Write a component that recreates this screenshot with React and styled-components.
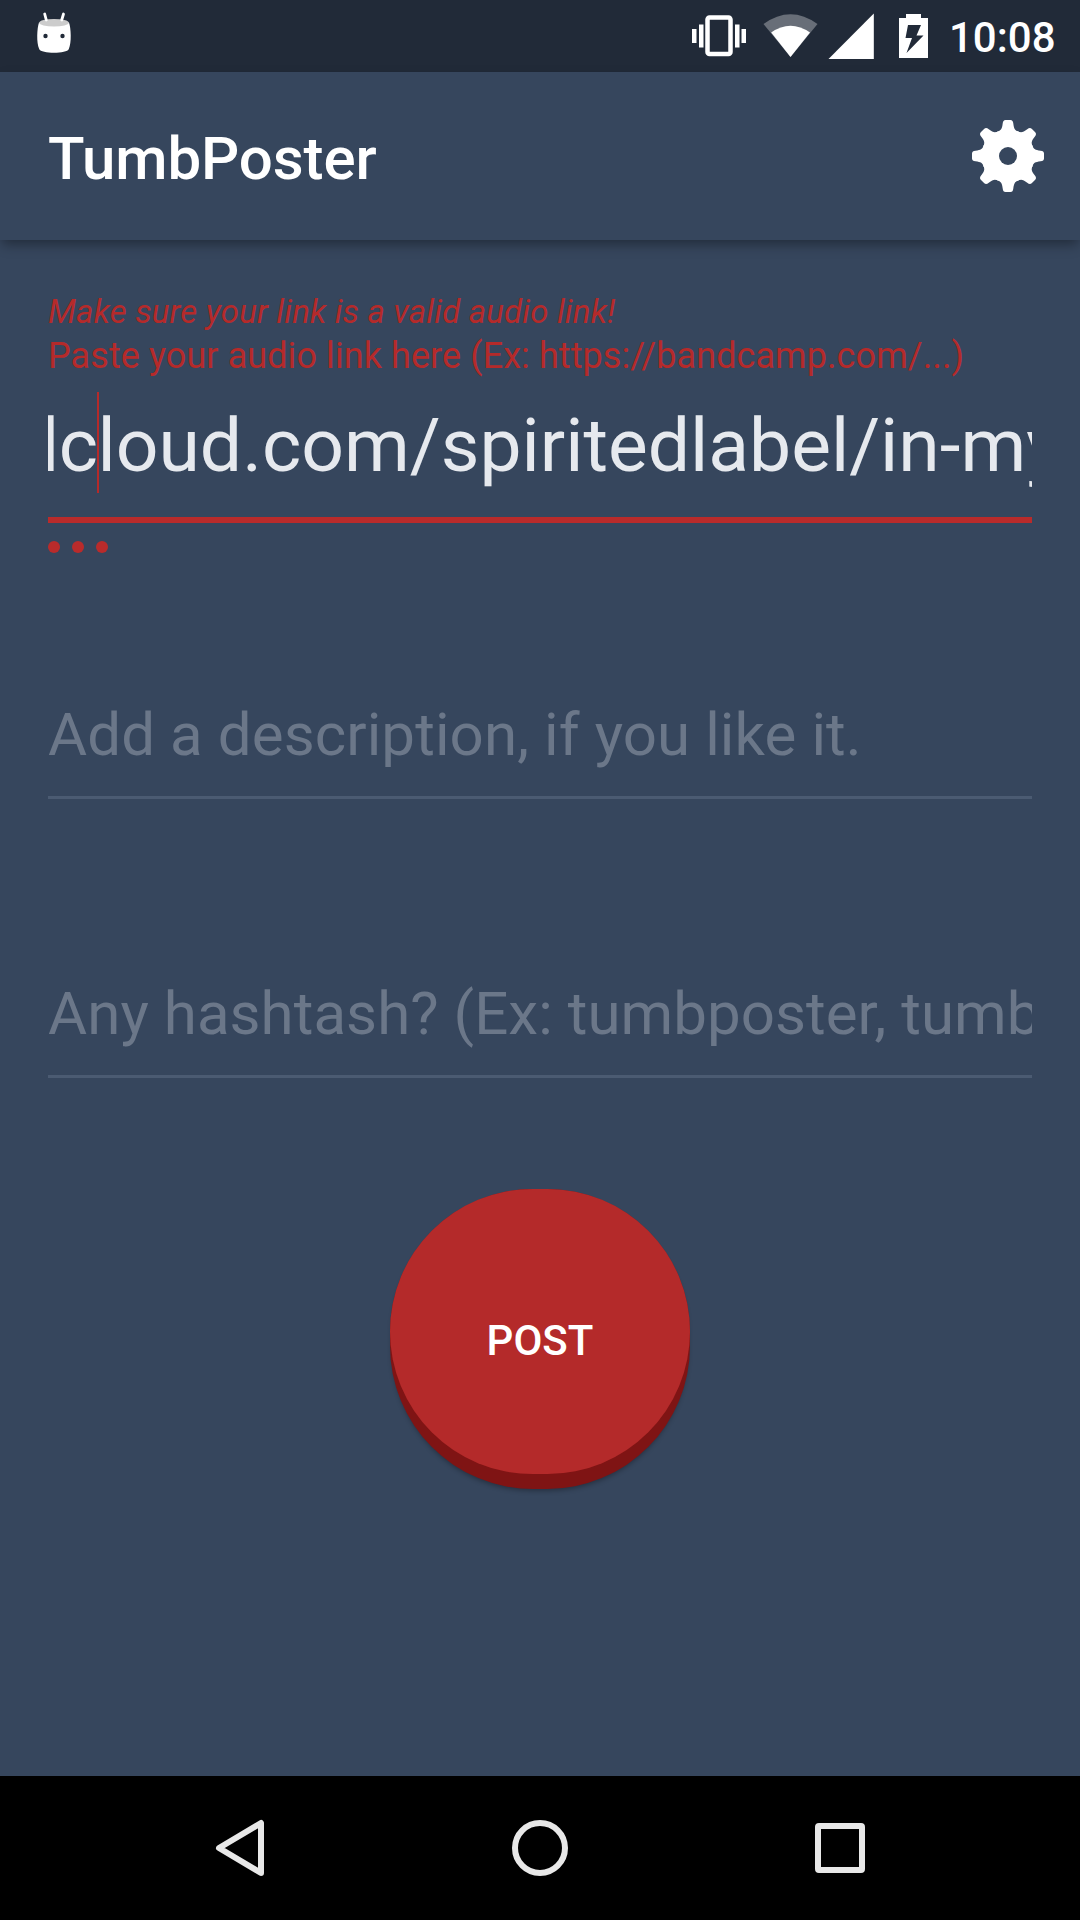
import React from "react";
import styled, { createGlobalStyle } from "styled-components";

const GlobalStyle = createGlobalStyle`
  * { box-sizing: border-box; }
  html, body { margin: 0; padding: 0; background: #36465d; }
  body { font-family: Roboto, "Noto Sans", sans-serif; }
`;

const Screen = styled.div`
  width: 1080px;
  height: 1920px;
  display: flex;
  flex-direction: column;
  background: #36465d;
  overflow: hidden;
`;

const StatusBar = styled.header`
  height: 72px;
  flex: none;
  display: flex;
  justify-content: space-between;
  background: #212a38;
`;

const StatusGroup = styled.div`
  display: flex;
  align-items: flex-start;
`;

const StatusIcon = styled.svg`
  display: block;
  height: 72px;
  flex: none;
`;

const Clock = styled.time`
  width: 131px;
  color: #fff;
  font-size: 42px;
  font-weight: 500;
  line-height: 76px;
  height: 72px;
  white-space: nowrap;
`;

const Toolbar = styled.div`
  height: 168px;
  flex: none;
  display: flex;
  align-items: center;
  justify-content: space-between;
  padding: 0 36px 0 48px;
  background: #36465d;
  box-shadow: 0 6px 12px -2px rgba(0, 0, 0, 0.38);
`;

const Title = styled.h1`
  margin: 0;
  padding-top: 5px;
  color: #fff;
  font-size: 60px;
  font-weight: 500;
  line-height: 70px;
  letter-spacing: -0.1px;
`;

const IconButton = styled.button`
  display: block;
  padding: 0;
  border: 0;
  background: none;
  line-height: 0;
`;

const Form = styled.main`
  flex: 1;
  display: flex;
  flex-direction: column;
  align-items: stretch;
  padding: 48px 48px 0;
`;

const Warning = styled.div`
  height: 44px;
  color: #b52a2a;
  font-size: 33px;
  font-style: italic;
  line-height: 47px;
  letter-spacing: 0.16px;
  white-space: nowrap;
`;

const Label = styled.div`
  height: 44px;
  color: #b52a2a;
  font-size: 36px;
  line-height: 49px;
  letter-spacing: 0.08px;
  white-space: nowrap;
`;

const LinkField = styled.div`
  height: 147px;
  display: flex;
  flex-direction: column;
  justify-content: space-between;
  border-bottom: 6px solid #b92b2b;
  overflow: hidden;
`;

const LinkText = styled.div`
  display: flex;
  height: 140px;
  margin-left: -7px;
  color: #e6e9ee;
  font-size: 75px;
  line-height: 138px;
  white-space: nowrap;
`;

const BeforeCaret = styled.span`
  letter-spacing: -0.5px;
`;

const Caret = styled.span`
  width: 2px;
  height: 101px;
  margin: 16px -1px 0;
  background: #b52a2a;
  flex: none;
`;

const Dots = styled.div`
  display: flex;
  gap: 12px;
  margin-top: 18px;
`;

const Dot = styled.span`
  width: 12px;
  height: 12px;
  border-radius: 50%;
  background: #b92b2b;
`;

const Field = styled.div`
  height: 123px;
  margin-top: ${(p) => p.$gap}px;
  border-bottom: 3px solid #4b5b72;
  color: #6b7789;
  font-size: 60px;
  line-height: 117px;
  letter-spacing: ${(p) => p.$tracking}px;
  white-space: nowrap;
  overflow: hidden;
`;

const PostButton = styled.button`
  align-self: center;
  width: 300px;
  height: 300px;
  margin-top: 111px;
  padding: 0 0 15px;
  border: 0;
  border-radius: 143px;
  background: #7f1414;
  box-shadow: 0 4px 5px -2px rgba(0, 0, 0, 0.3);
`;

const PostFace = styled.span`
  display: flex;
  align-items: center;
  justify-content: center;
  height: 285px;
  padding-top: 18px;
  border-radius: 143px;
  background: #b42a2a;
  color: #fff;
  font-family: Roboto, sans-serif;
  font-size: 42px;
  font-weight: 500;
  line-height: 50px;
`;

const NavBar = styled.nav`
  height: 144px;
  flex: none;
  display: flex;
  justify-content: center;
  align-items: center;
  gap: 220px;
  background: #000;
`;

function AndroidHead() {
  return (
    <StatusIcon width="90" viewBox="0 0 90 72">
      <path d="M39 22.500 C37 28 36.300 43 39.200 49 C41 54 67 54 68.800 49 C71.700 43 71 28 69 22.500 Z" fill="#fff" />
      <ellipse cx="54" cy="22.700" rx="14.800" ry="3.800" fill="#ccc" />
      <path d="M44.700 14 L46.300 20 M63.500 14 L61.700 20" stroke="#fff" strokeWidth="2.800" strokeLinecap="round" />
      <circle cx="45.500" cy="36" r="2.200" fill="#212a38" />
      <circle cx="62.500" cy="36" r="2.200" fill="#212a38" />
    </StatusIcon>
  );
}

function StatusIcons() {
  return (
    <StatusIcon width="269" viewBox="680 0 269 72">
      <g fill="#fff">
        <rect x="692" y="29" width="4.500" height="14" />
        <rect x="699" y="24.500" width="4.500" height="23" />
        <rect x="735" y="24.500" width="4.500" height="23" />
        <rect x="741.500" y="29" width="4.500" height="14" />
      </g>
      <rect x="707.500" y="17.500" width="23" height="36.500" rx="2" fill="none" stroke="#fff" strokeWidth="4.500" />
      <path d="M790.500 57 L763.500 24 Q790.500 4.500 817.500 24 Z" fill="#fff" opacity=".32" />
      <path d="M790.500 57 L771.200 32.500 Q790.500 19 810 32.500 Z" fill="#fff" />
      <path d="M828.500 59 H873.800 V13.500 Z" fill="#fff" />
      <path fillRule="evenodd" fill="#fff" d="M906 14 H921 V18 H928 V58 H899 V18 H906 Z M908 25 H921 L916.500 35.500 H923.500 L906.500 53 L912 38 H905.500 Z" />
    </StatusIcon>
  );
}

const teeth = [0, 45, 90, 135, 180, 225, 270, 315];

function Gear() {
  return (
    <svg width="72" height="72" viewBox="-36 -36 72 72">
      <defs>
        <mask id="hub">
          <rect x="-36" y="-36" width="72" height="72" fill="#fff" />
          <circle r="9" fill="#000" />
        </mask>
      </defs>
      <g fill="#fff" mask="url(#hub)">
        <circle r="26.500" />
        {teeth.map((a) => (
          <path
            key={a}
            transform={`rotate(${a})`}
            d="M-11 -24 C-7 -25.500 -6 -27 -5.300 -32.500 Q-5 -36 -2.500 -36 H2.500 Q5 -36 5.300 -32.500 C6 -27 7 -25.500 11 -24 Z"
          />
        ))}
      </g>
    </svg>
  );
}

export default function App() {
  return (
    <>
      <GlobalStyle />
      <Screen>
        <StatusBar>
          <StatusGroup>
            <AndroidHead />
          </StatusGroup>
          <StatusGroup>
            <StatusIcons />
            <Clock>10:08</Clock>
          </StatusGroup>
        </StatusBar>
        <Toolbar>
          <Title>TumbPoster</Title>
          <IconButton aria-label="Settings">
            <Gear />
          </IconButton>
        </Toolbar>
        <Form>
          <Warning>Make sure your link is a valid audio link!</Warning>
          <Label>Paste your audio link here (Ex: https://bandcamp.com/...)</Label>
          <LinkField>
            <LinkText>
              <BeforeCaret>lc</BeforeCaret>
              <Caret />
              <span>loud.com/spiritedlabel/in-my</span>
            </LinkText>
          </LinkField>
          <Dots>
            <Dot />
            <Dot />
            <Dot />
          </Dots>
          <Field $gap={123} $tracking={0.1}>Add a description, if you like it.</Field>
          <Field $gap={156} $tracking={0.06}>Any hashtash? (Ex: tumbposter, tumb</Field>
          <PostButton>
            <PostFace>POST</PostFace>
          </PostButton>
        </Form>
        <NavBar>
          <IconButton aria-label="Back">
            <svg width="80" height="80" viewBox="200 1808 80 80">
              <path d="M261 1823 V1873 L219 1848 Z" fill="none" stroke="#e8e8e8" strokeWidth="6" strokeLinejoin="round" />
            </svg>
          </IconButton>
          <IconButton aria-label="Home">
            <svg width="80" height="80" viewBox="-40 -40 80 80">
              <circle r="25" fill="none" stroke="#e8e8e8" strokeWidth="6" />
            </svg>
          </IconButton>
          <IconButton aria-label="Recent apps">
            <svg width="80" height="80" viewBox="-40 -40 80 80">
              <rect x="-22" y="-22" width="44" height="44" rx="1" fill="none" stroke="#e8e8e8" strokeWidth="6" />
            </svg>
          </IconButton>
        </NavBar>
      </Screen>
    </>
  );
}
